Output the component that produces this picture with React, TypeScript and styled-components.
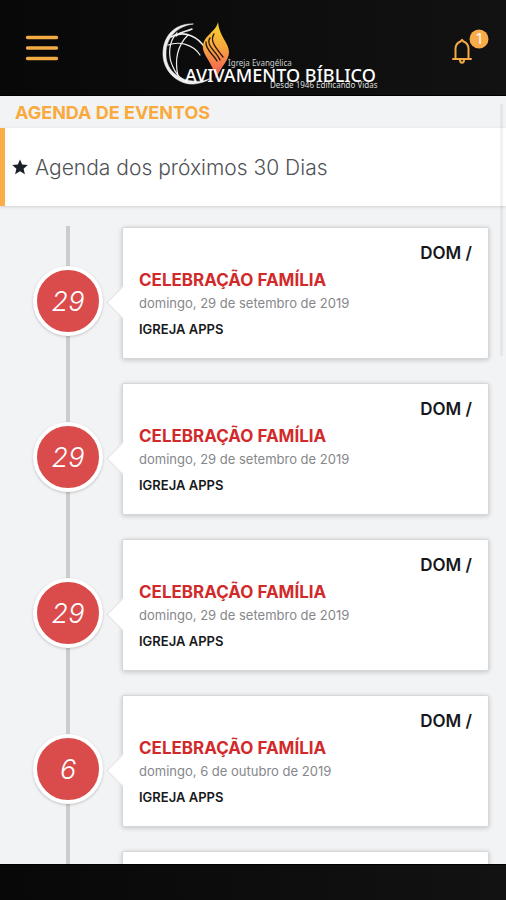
import React from "react";
import styled, { createGlobalStyle } from "styled-components";

const GlobalStyle = createGlobalStyle`
  *, *::before, *::after { box-sizing: border-box; }
  body {
    margin: 0;
    background: #f2f3f5;
    font-family: Inter, "Liberation Sans", sans-serif;
  }
`;

const Screen = styled.div`
  display: flex;
  flex-direction: column;
  height: 100vh;
  overflow: hidden;
`;

const Header = styled.header`
  display: flex;
  flex: none;
  align-items: center;
  justify-content: space-between;
  height: 96px;
  padding: 0 17px 0 24px;
  background: linear-gradient(90deg, #080808, #121212);
  border-bottom: 1px solid #000;
`;

const IconButton = styled.button`
  display: flex;
  padding: 0;
  border: 0;
  background: none;
  color: #f4aa45;
  cursor: pointer;
`;

const Brand = styled.a`
  display: flex;
  padding: 14px 0 0 26px;
`;

const Main = styled.main`
  position: relative;
  flex: 1;
  min-height: 0;
`;

const ScrollArea = styled.div`
  height: 100%;
  overflow-y: auto;
  scrollbar-width: none;
`;

const ScrollThumb = styled.div`
  position: absolute;
  z-index: 2;
  top: 8px;
  right: 3px;
  width: 3px;
  height: 252px;
  background: rgba(0, 0, 0, 0.05);
`;

const PageTitle = styled.h1`
  margin: 0;
  padding: 2px 15px 0;
  color: #f9aa3c;
  font-size: 18px;
  font-weight: 700;
  line-height: 30px;
`;

const Banner = styled.h2`
  display: flex;
  align-items: center;
  gap: 7px;
  height: 78px;
  margin: 0;
  padding: 0 7px;
  border-left: 5px solid #fbad47;
  background: #fff;
  box-shadow: 0 1px 3px rgba(0, 0, 0, 0.15);
  color: #505256;
  font-size: 21px;
  font-weight: 300;
`;

const Timeline = styled.ol`
  position: relative;
  display: flex;
  flex-direction: column;
  gap: 24px;
  margin: 0;
  padding: 21px 17px 20px 33px;
  list-style: none;

  &::before {
    content: "";
    position: absolute;
    top: 20px;
    bottom: 0;
    left: 66px;
    width: 4px;
    background: #cbcccd;
  }
`;

const Entry = styled.li`
  position: relative;
  display: grid;
  grid-template-columns: 70px 1fr;
  column-gap: 19px;
`;

const DayMarker = styled.div`
  display: flex;
  align-items: center;
  justify-content: center;
  width: 70px;
  height: 70px;
  margin-top: 39px;
  border: 4px solid #fff;
  border-radius: 50%;
  background: #da4c4c;
  box-shadow: 0 1px 3px rgba(0, 0, 0, 0.2);
  color: #fff;
  font-size: 27px;
  font-style: italic;
  font-weight: 300;
`;

const Card = styled.article`
  position: relative;
  display: flex;
  flex-direction: column;
  height: 132px;
  padding: 15px 16px;
  border: 1px solid #d6d7d8;
  border-radius: 2px;
  background: #fff;
  box-shadow: 0 1px 5px rgba(0, 0, 0, 0.2);

  &::before {
    content: "";
    position: absolute;
    top: 63px;
    left: -12px;
    width: 23px;
    height: 23px;
    border: solid #e0e1e2;
    border-width: 0 0 1px 1px;
    background: #fff;
    transform: rotate(45deg);
  }
`;

const Weekday = styled.span`
  align-self: flex-end;
  color: #17181c;
  font-size: 17px;
  font-weight: 600;
  line-height: 20px;
`;

const EventName = styled.h3`
  position: relative;
  margin: 4px 0 0;
  color: #d22a2b;
  font-size: 17px;
  font-weight: 700;
  line-height: 26px;
`;

const EventDate = styled.time`
  position: relative;
  color: #85878a;
  font-size: 13px;
  line-height: 20px;
`;

const Place = styled.strong`
  position: relative;
  margin-top: 6px;
  color: #17181c;
  font-size: 13px;
  font-weight: 600;
  line-height: 20px;
`;

const Footer = styled.footer`
  flex: none;
  height: 36px;
  border-top: 1px solid #000;
  background: linear-gradient(90deg, #080808, #121212);
`;

const MenuIcon = () => (
  <svg width="36" height="28" viewBox="0 0 36 28" aria-hidden="true">
    <path d="M3.5 3.5H32.5M3.5 14H32.5M3.5 24.500H32.5" stroke="currentColor" strokeWidth="3.4" strokeLinecap="round" />
  </svg>
);

const BellIcon = () => (
  <svg width="38" height="38" viewBox="0 0 38 38" aria-hidden="true">
    <g fill="none" stroke="currentColor" strokeWidth="2" strokeLinejoin="round" strokeLinecap="round">
      <path d="M2 30H20M4.500 30V20C4.500 16 7 13.500 9.500 12.500L11 10.800L12.500 12.500C15 13.500 17.500 16 17.500 20V30" />
      <path d="M9 31C9 34.500 13 34.500 13 31" />
    </g>
    <circle cx="28" cy="10" r="9.500" fill="#f8ac49" />
    <text x="28" y="15" textAnchor="middle" fill="#fff" fontSize="14" fontFamily="Inter, sans-serif">1</text>
  </svg>
);

const Logo = () => (
  <svg width="220" height="70" viewBox="0 0 220 70" role="img" aria-label="Igreja Evangélica Avivamento Bíblico">
    <defs>
      <linearGradient id="flame" x1="0" y1="0" x2="0" y2="1">
        <stop offset="0" stopColor="#f6d52c" />
        <stop offset="0.45" stopColor="#f7a53f" />
        <stop offset="0.8" stopColor="#f5704f" />
        <stop offset="1" stopColor="#ee4a50" />
      </linearGradient>
    </defs>
    <g fill="none" stroke="#eee" strokeLinecap="round">
      <path d="M34 4C20 3 5 12 4 32C3 51 19 65 35 64C43 63 48 61 52 58C46 61 40 62 34 61C19 60 6 49 7 33C7 18 18 6 34 4Z" fill="#eee" strokeWidth="0.6" />
      <path d="M33 9C27 12 22 11 17 16" strokeWidth="1.500" />
      <path d="M12 17C26 9 40 18 46 28" strokeWidth="1.500" />
      <path d="M9 25C20 21 34 24 41 35" strokeWidth="1.200" />
      <path d="M29 15C20 24 15 38 19 56" strokeWidth="1.200" />
      <path d="M18 13C9 22 9 37 14 47C16 52 19 56 23 59" strokeWidth="1.200" />
    </g>
    <path d="M59 2C57 12 45 15 44 26C43 35 54 42 57 59C62 46 70 41 70 32C70 23 60 16 59 2Z" fill="url(#flame)" />
    <g fill="none" stroke="#29170c" strokeWidth="1.300" strokeLinecap="round">
      <path d="M55 14C50 21 58 29 64 37" />
      <path d="M51 18C46 25 58 32 61 40" />
      <path d="M47 22C46 29 54 34 58 41" />
    </g>
    <g fill="#fff" fontFamily='"Noto Sans", sans-serif'>
      <text x="69" y="46" fontSize="8" fill="#ccc">Igreja Evangélica</text>
      <text x="26" y="62" fontSize="18" fontWeight="500">AVIVAMENTO BÍBLICO</text>
      <text x="111" y="68" fontSize="8" fill="#ddd">Desde 1946 Edificando Vidas</text>
    </g>
  </svg>
);

const StarIcon = () => (
  <svg width="16" height="16" viewBox="0 0 16 16" aria-hidden="true">
    <path d="M8 0.500L10.200 5.500L15.800 6L11.600 9.700L12.900 15.200L8 12.300L3.100 15.200L4.400 9.700L0.200 6L5.800 5.500Z" fill="#1b2029" />
  </svg>
);

const events = [
  { day: "29", date: "2019-09-29", label: "domingo, 29 de setembro de 2019" },
  { day: "29", date: "2019-09-29", label: "domingo, 29 de setembro de 2019" },
  { day: "29", date: "2019-09-29", label: "domingo, 29 de setembro de 2019" },
  { day: "6", date: "2019-10-06", label: "domingo, 6 de outubro de 2019" },
  { day: "6", date: "2019-10-06", label: "domingo, 6 de outubro de 2019" },
];

export default function App() {
  return (
    <Screen>
      <GlobalStyle />
      <Header>
        <IconButton type="button" aria-label="Menu">
          <MenuIcon />
        </IconButton>
        <Brand href="#">
          <Logo />
        </Brand>
        <IconButton type="button" aria-label="Notificações">
          <BellIcon />
        </IconButton>
      </Header>
      <Main>
        <ScrollThumb />
        <ScrollArea>
          <PageTitle>AGENDA DE EVENTOS</PageTitle>
          <Banner>
            <StarIcon />
            Agenda dos próximos 30 Dias
          </Banner>
          <Timeline>
            {events.map((event, index) => (
              <Entry key={index}>
                <DayMarker>{event.day}</DayMarker>
                <Card>
                  <Weekday>DOM /</Weekday>
                  <EventName>CELEBRAÇÃO FAMÍLIA</EventName>
                  <EventDate dateTime={event.date}>{event.label}</EventDate>
                  <Place>IGREJA APPS</Place>
                </Card>
              </Entry>
            ))}
          </Timeline>
        </ScrollArea>
      </Main>
      <Footer />
    </Screen>
  );
}
